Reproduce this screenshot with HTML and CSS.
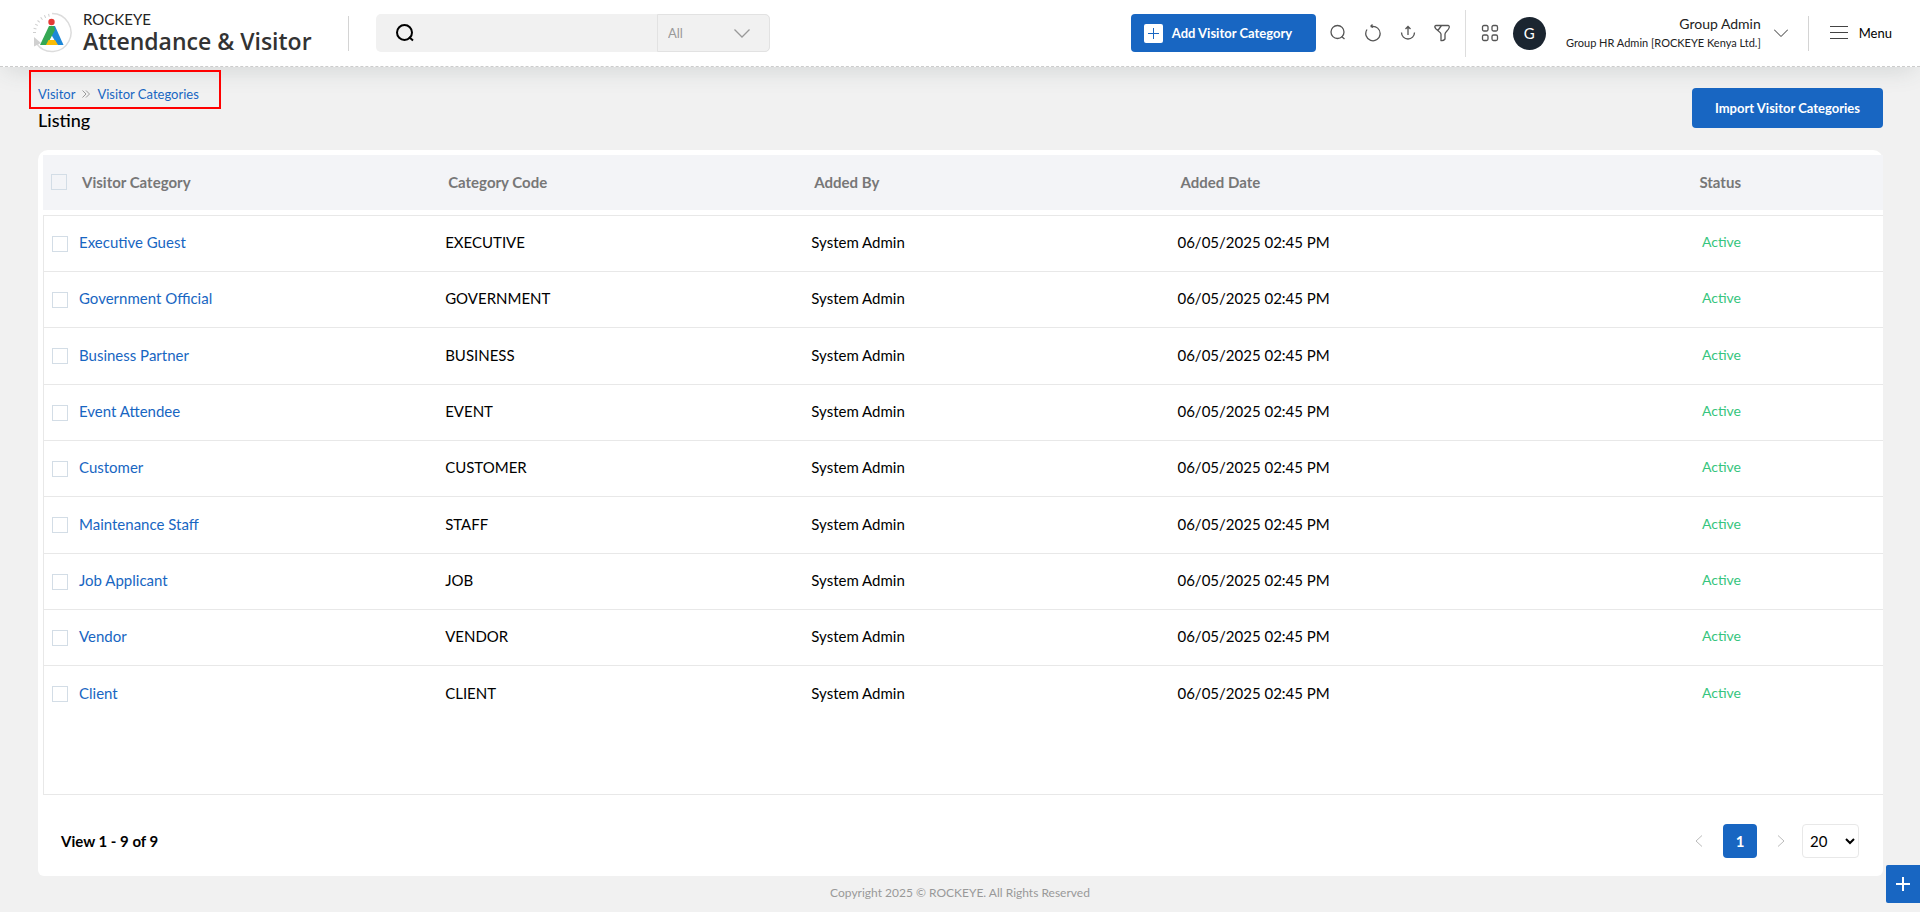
FILE: index.html
```html
<!DOCTYPE html>
<html lang="en">
<head>
<meta charset="utf-8">
<title>Visitor Categories</title>
<link rel="stylesheet" href="styles.css">
</head>
<body>
<header class="topbar">
  <a class="brand" href="#">
    <svg class="brand-logo" viewBox="0 0 40 42" aria-hidden="true">
      <path d="M20 1.500a19 19 0 1 1-15.500 30" fill="none" stroke="#dcdcdc" stroke-width="1.500"/>
      <path d="M2.500 21A18 18 0 0 1 19 3" fill="none" stroke="#cfcfcf" stroke-width="3" stroke-dasharray="1 3"/>
      <path d="M2 25l7 6-7 3.500z" fill="#d0d0d0"/>
      <path d="M19 14h4l8.500 19h-6L17 19z" fill="#1e88d8"/>
      <path d="M17 14h5l1 4-8 15H8z" fill="#34a853"/>
      <path d="M16.500 28h6.500l3 5H14z" fill="#fbbc05"/>
      <circle cx="19.500" cy="10" r="3.200" fill="#e53935"/>
    </svg>
    <span class="brand-text"><span class="brand-top">ROCKEYE</span><span class="brand-name">Attendance &amp; Visitor</span></span>
  </a>
  <span class="divider"></span>
  <form class="search">
    <svg class="search-icon" viewBox="0 0 20 20" aria-hidden="true"><circle cx="9.500" cy="9.500" r="7.500"/><path d="M14 14l4 3.500"/></svg>
    <input class="search-input" type="text" aria-label="Search">
    <select class="search-scope" aria-label="Search scope"><option>All</option></select>
  </form>
  <div class="actions">
    <button class="btn add" type="button">
      <svg class="add-icon" viewBox="0 0 19 19" aria-hidden="true"><rect width="19" height="19" rx="2" fill="#fff"/><path d="M9.500 4v11M4 9.500h11" stroke="#1866c2"/></svg>
      Add Visitor Category</button>
    <button class="icon-btn" type="button" aria-label="Search"><svg viewBox="0 0 18 18"><circle cx="8.500" cy="8" r="6.500"/><path d="M12.500 12.500l3 2.500"/></svg></button>
    <button class="icon-btn" type="button" aria-label="Refresh"><svg viewBox="0 0 18 18"><path d="M7.500 2.500a7.200 7.200 0 1 1-4.500 3M6.500 2.500l2-2M6.500 2.500l2.500 1"/></svg></button>
    <button class="icon-btn" type="button" aria-label="Export"><svg viewBox="0 0 18 18"><path d="M2.500 8.500a6.500 6.500 0 0 0 13 0M9 11V2.500M6.500 5L9 2.500 11.500 5"/></svg></button>
    <button class="icon-btn filter" type="button" aria-label="Filter"><svg viewBox="1 0 16 18"><path d="M3 1.500h12q1.500 0 1.200 2c-.5 3-4.200 4-4.200 6.500v5q-1.500 2-4 1.500V10C8 7.500 2.500 6.500 1.800 3q0-1.500 1.200-1.500zM8.500 1.500L4.500 7"/></svg></button>
  </div>
  <div class="account">
    <button class="icon-btn apps" type="button" aria-label="Apps"><svg viewBox="0 0 18 18"><rect x="1.500" y="1.500" width="5.500" height="5.500" rx="1.500"/><rect x="11" y="1.500" width="5.500" height="5.500" rx="1.500"/><rect x="1.500" y="11" width="5.500" height="5.500" rx="1.500"/><rect x="11" y="11" width="5.500" height="5.500" rx="1.500"/></svg></button>
    <span class="avatar">G</span>
    <button class="user" type="button">
      <span class="user-text"><span class="user-name">Group Admin</span><span class="user-role">Group HR Admin [ROCKEYE Kenya Ltd.]</span></span>
      <svg class="chevron" viewBox="0 0 14 8" aria-hidden="true"><path d="M0 .5l7 7 7-7"/></svg>
    </button>
  </div>
  <span class="divider"></span>
  <button class="menu" type="button"><svg viewBox="0 0 18 14" aria-hidden="true"><path d="M0 .5h18M0 6.500h18M0 12.500h18"/></svg>Menu</button>
</header>

<main class="page">
  <div class="page-head">
    <div class="page-title">
      <nav class="crumbs" aria-label="Breadcrumb">
        <a href="#">Visitor</a>
        <svg viewBox="0 0 8 8" aria-hidden="true"><path d="M.5.5L4 4 .5 7.500M4 .5L7.500 4 4 7.500"/></svg>
        <a href="#">Visitor Categories</a>
      </nav>
      <h1>Listing</h1>
    </div>
    <button class="btn import" type="button">Import Visitor Categories</button>
  </div>

  <section class="card">
    <div class="grid">
      <table>
        <thead><tr><th class="c-check"><input type="checkbox" aria-label="Select all"></th><th class="c-col">Visitor Category</th><th class="c-col">Category Code</th><th class="c-col">Added By</th><th class="c-date">Added Date</th><th class="c-status">Status</th></tr></thead>
        <tbody>
          <tr><td><input type="checkbox" aria-label="Executive Guest"></td><td><a href="#">Executive Guest</a></td><td>EXECUTIVE</td><td>System Admin</td><td>06/05/2025 02:45 PM</td><td class="status">Active</td></tr>
          <tr><td><input type="checkbox" aria-label="Government Official"></td><td><a href="#">Government Official</a></td><td>GOVERNMENT</td><td>System Admin</td><td>06/05/2025 02:45 PM</td><td class="status">Active</td></tr>
          <tr><td><input type="checkbox" aria-label="Business Partner"></td><td><a href="#">Business Partner</a></td><td>BUSINESS</td><td>System Admin</td><td>06/05/2025 02:45 PM</td><td class="status">Active</td></tr>
          <tr><td><input type="checkbox" aria-label="Event Attendee"></td><td><a href="#">Event Attendee</a></td><td>EVENT</td><td>System Admin</td><td>06/05/2025 02:45 PM</td><td class="status">Active</td></tr>
          <tr><td><input type="checkbox" aria-label="Customer"></td><td><a href="#">Customer</a></td><td>CUSTOMER</td><td>System Admin</td><td>06/05/2025 02:45 PM</td><td class="status">Active</td></tr>
          <tr><td><input type="checkbox" aria-label="Maintenance Staff"></td><td><a href="#">Maintenance Staff</a></td><td>STAFF</td><td>System Admin</td><td>06/05/2025 02:45 PM</td><td class="status">Active</td></tr>
          <tr><td><input type="checkbox" aria-label="Job Applicant"></td><td><a href="#">Job Applicant</a></td><td>JOB</td><td>System Admin</td><td>06/05/2025 02:45 PM</td><td class="status">Active</td></tr>
          <tr><td><input type="checkbox" aria-label="Vendor"></td><td><a href="#">Vendor</a></td><td>VENDOR</td><td>System Admin</td><td>06/05/2025 02:45 PM</td><td class="status">Active</td></tr>
          <tr><td><input type="checkbox" aria-label="Client"></td><td><a href="#">Client</a></td><td>CLIENT</td><td>System Admin</td><td>06/05/2025 02:45 PM</td><td class="status">Active</td></tr>
        </tbody>
      </table>
    </div>
    <div class="pager">
      <span class="pager-info">View 1 - 9 of 9</span>
      <button class="pager-arrow" type="button" aria-label="Previous page"><svg viewBox="0 0 8 12"><path d="M7 .5L1 6l6 5.500"/></svg></button>
      <button class="pager-page" type="button">1</button>
      <button class="pager-arrow" type="button" aria-label="Next page"><svg viewBox="0 0 8 12"><path d="M1 .5L7 6l-6 5.500"/></svg></button>
      <select class="pager-size" aria-label="Rows per page"><option>20</option></select>
    </div>
  </section>
</main>
<footer class="footer">Copyright 2025 © ROCKEYE. All Rights Reserved</footer>
<button class="fab" type="button" aria-label="Add"><svg viewBox="0 0 14 14"><path d="M7 0v14M0 7h14"/></svg></button>
<div class="highlight"></div>
</body>
</html>
```
FILE: styles.css
```css
* { box-sizing: border-box; }
body {
  margin: 0;
  min-height: 100vh;
  display: flex;
  flex-direction: column;
  background: #f1f1f1;
  color: #000;
  font: 15px/20px Lato, "Liberation Sans", sans-serif;
}
button, input, select { font: inherit; color: inherit; margin: 0; }
button { border: 0; padding: 0; background: none; cursor: pointer; }
a { color: #1866c2; text-decoration: none; }
svg { display: block; fill: none; stroke-width: 1; }

.topbar {
  display: flex;
  align-items: center;
  height: 67px;
  padding: 0 28px 0 32px;
  background: #fff;
  border-bottom: 1px dashed #ccc;
  box-shadow: 0 8px 24px -6px rgba(60, 80, 75, .18);
}
.brand { display: flex; align-items: center; gap: 11px; width: 316px; color: #333; }
.brand-logo { width: 40px; height: 42px; }
.brand-text { display: flex; flex-direction: column; }
.brand-top { font: 15px/16px Lato, sans-serif; color: #222; }
.brand-name { font: 600 23px/28px "Open Sans", sans-serif; white-space: nowrap; }
.divider { width: 1px; height: 35px; background: #d4d4d4; }

.search { display: flex; align-items: center; margin-left: 27px; width: 394px; height: 38px; background: #f1f1f1; border-radius: 5px; }
.search-icon { width: 20px; height: 20px; margin-left: 19px; stroke: #000; stroke-width: 2; }
.search-input { flex: 1; min-width: 0; height: 38px; border: 0; background: none; outline: 0; }
.search-scope {
  width: 113px; height: 38px; padding: 0 10px;
  appearance: none;
  border: 1px solid #e2e2e2; border-radius: 0 5px 5px 0;
  color: #999; font-size: 13px;
  background: #f1f1f1 url("data:image/svg+xml,%3Csvg xmlns='http://www.w3.org/2000/svg' width='16' height='9' fill='none' stroke='%23999' stroke-width='1.300'%3E%3Cpath d='M.5.5L8 8 15.500.5'/%3E%3C/svg%3E") no-repeat right 19px center;
}

.actions { display: flex; align-items: center; gap: 17px; margin-left: auto; padding-right: 15px; }
.btn { background: #1866c2; color: #fff; border-radius: 4px; font-weight: 700; font-size: 13px; white-space: nowrap; }
.add { display: flex; align-items: center; gap: 9px; width: 185px; height: 38px; padding-left: 13px; margin-right: -4px; }
.add-icon { width: 19px; height: 19px; }
.icon-btn svg { width: 18px; height: 18px; stroke: #555; stroke-width: 1.3; }
.filter svg { width: 16px; }
.account { display: flex; align-items: center; height: 47px; padding-left: 15px; border-left: 1px solid #ddd; }
.avatar { width: 33px; height: 33px; margin-left: 14px; border-radius: 50%; background: #1b2530; color: #fff; text-align: center; line-height: 33px; }
.user { display: flex; align-items: center; gap: 13px; margin: 0 20px 0 14px; }
.user-text { display: flex; flex-direction: column; min-width: 201px; text-align: right; }
.user-name { font-size: 14px; line-height: 20px; color: #222; }
.user-role { font-size: 11px; line-height: 18px; color: #222; }
.chevron { width: 14px; height: 8px; stroke: #333; }
.menu { display: flex; align-items: center; gap: 11px; margin-left: 21px; font-size: 13px; }
.menu svg { width: 18px; height: 14px; stroke: #444; }

.page { flex: 1; display: flex; flex-direction: column; padding: 14px 37px 0 38px; }
.page-head { display: flex; justify-content: space-between; height: 69px; }
.crumbs { display: flex; align-items: center; gap: 7px; height: 26px; font-size: 13px; }
.crumbs svg { width: 8px; height: 8px; stroke: #999; }
h1 { margin: 0; font-size: 18px; line-height: 26px; font-weight: 500; }
.import { width: 191px; height: 40px; margin-top: 7px; }

.card { flex: 1; display: flex; flex-direction: column; background: #fff; border-radius: 10px 10px 6px 6px; padding-top: 5px; }
.grid { flex: 1; display: flex; flex-direction: column; margin-left: 5px; }
.grid::after { content: ""; flex: 1; border-left: 1px solid #e8e8e8; border-bottom: 1px solid #e8e8e8; }
table { width: 100%; border-collapse: separate; border-spacing: 0; table-layout: fixed; }
th { height: 60px; padding: 0 0 2px 3px; border-bottom: 5px solid #fff; background: #f3f4f7; color: #777; font-weight: 700; text-align: left; }
td { height: 56px; padding: 0 0 3px; border-top: 1px solid #e8e8e8; }
tbody tr:nth-child(3n) td { height: 57px; }
td:first-child { border-left: 1px solid #e8e8e8; padding: 0 0 0 8px; }
th:first-child { padding-left: 8px; }
.c-check { width: 36px; }
.c-col { width: 19.9%; }
.c-date { width: 25%; }
th.c-status, .status { text-align: right; padding-right: 142px; }
.status { color: #36c57d; font-size: 14px; }
input[type=checkbox] { appearance: none; display: block; width: 16px; height: 16px; border: 1px solid #d3dde6; background: transparent; }

.pager { display: flex; align-items: center; height: 81px; padding: 10px 24px 0 23px; }
.pager-info { margin-right: auto; font-weight: 700; }
.pager-arrow svg { width: 8px; height: 12px; stroke: #bbb; }
.pager-page { width: 34px; height: 34px; margin: 0 20px; border-radius: 4px; background: #1866c2; color: #fff; font-weight: 700; }
.pager-size { width: 57px; height: 34px; margin-left: 17px; padding: 0 0 0 3px; border: 1px solid #e8e8e8; border-radius: 4px; background: #fff; }

.footer { height: 36px; text-align: center; color: #999; font-size: 12px; line-height: 34px; }
.fab { position: fixed; right: 0; bottom: 9px; width: 34px; height: 38px; padding-left: 10px; background: #1866c2; border-radius: 2px 0 0 2px; }
.fab svg { width: 14px; height: 14px; stroke: #fff; stroke-width: 2; }
.highlight { position: absolute; left: 29px; top: 70px; width: 192px; height: 39px; border: 2px solid #f00; pointer-events: none; }
```
